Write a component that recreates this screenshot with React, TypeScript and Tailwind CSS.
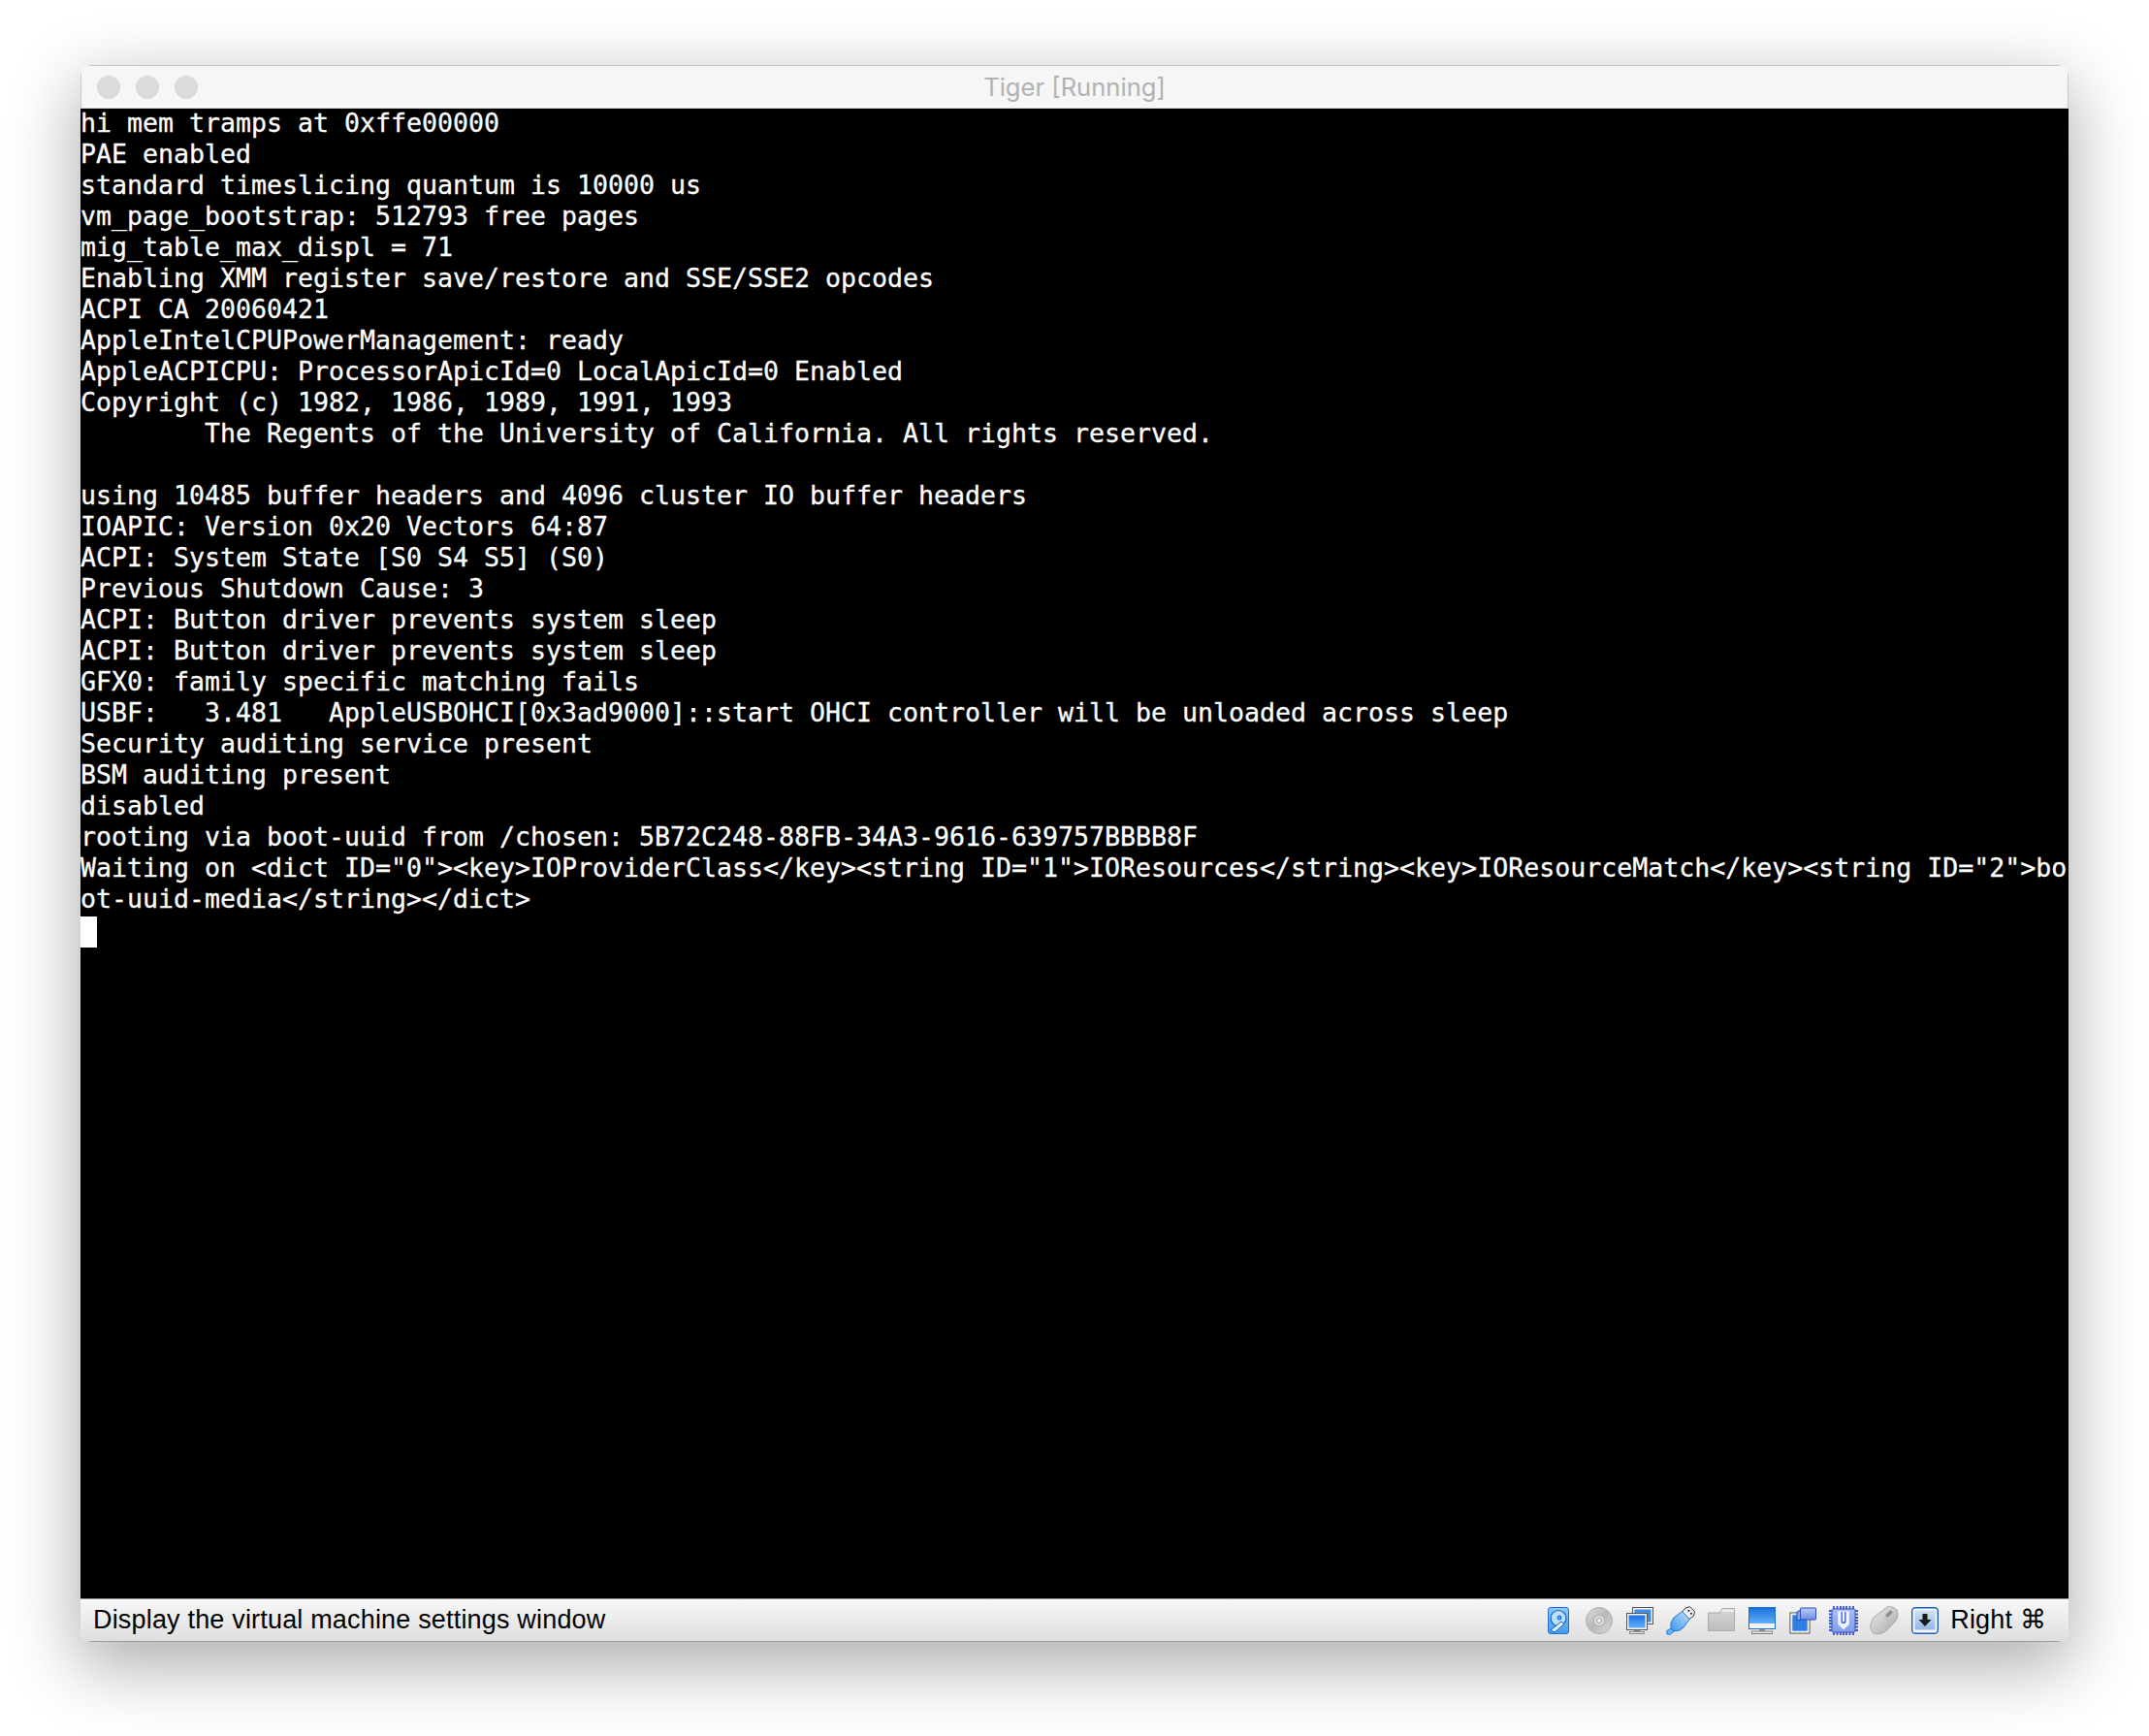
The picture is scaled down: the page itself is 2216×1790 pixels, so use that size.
import React from "react";

const lines = [
  "hi mem tramps at 0xffe00000",
  "PAE enabled",
  "standard timeslicing quantum is 10000 us",
  "vm_page_bootstrap: 512793 free pages",
  "mig_table_max_displ = 71",
  "Enabling XMM register save/restore and SSE/SSE2 opcodes",
  "ACPI CA 20060421",
  "AppleIntelCPUPowerManagement: ready",
  "AppleACPICPU: ProcessorApicId=0 LocalApicId=0 Enabled",
  "Copyright (c) 1982, 1986, 1989, 1991, 1993",
  "        The Regents of the University of California. All rights reserved.",
  " ",
  "using 10485 buffer headers and 4096 cluster IO buffer headers",
  "IOAPIC: Version 0x20 Vectors 64:87",
  "ACPI: System State [S0 S4 S5] (S0)",
  "Previous Shutdown Cause: 3",
  "ACPI: Button driver prevents system sleep",
  "ACPI: Button driver prevents system sleep",
  "GFX0: family specific matching fails",
  "USBF:   3.481   AppleUSBOHCI[0x3ad9000]::start OHCI controller will be unloaded across sleep",
  "Security auditing service present",
  "BSM auditing present",
  "disabled",
  "rooting via boot-uuid from /chosen: 5B72C248-88FB-34A3-9616-639757BBBB8F",
  'Waiting on <dict ID="0"><key>IOProviderClass</key><string ID="1">IOResources</string><key>IOResourceMatch</key><string ID="2">bo',
  "ot-uuid-media</string></dict>",
];

const Defs = () => (
  <svg width="0" height="0" className="absolute">
    <defs>
      <linearGradient id="blueV" x1="0" y1="0" x2="0" y2="1">
        <stop offset="0" stopColor="#1a6fe0" />
        <stop offset="1" stopColor="#62b0f8" />
      </linearGradient>
      <linearGradient id="hdd" x1="0" y1="0" x2="0" y2="1">
        <stop offset="0" stopColor="#8fcbf8" />
        <stop offset="1" stopColor="#3f9bf0" />
      </linearGradient>
      <linearGradient id="cd" x1="0" y1="0" x2="1" y2="1">
        <stop offset="0" stopColor="#dedede" />
        <stop offset="0.5" stopColor="#b8b8b8" />
        <stop offset="1" stopColor="#dcdcdc" />
      </linearGradient>
      <linearGradient id="usb" x1="0" y1="1" x2="1" y2="0">
        <stop offset="0" stopColor="#3d94ea" />
        <stop offset="1" stopColor="#bfe3fb" />
      </linearGradient>
      <linearGradient id="folder" x1="0" y1="0" x2="0" y2="1">
        <stop offset="0" stopColor="#d6d6d6" />
        <stop offset="1" stopColor="#bdbdbd" />
      </linearGradient>
      <linearGradient id="clip" x1="0" y1="0" x2="0" y2="1">
        <stop offset="0" stopColor="#b6cdf8" />
        <stop offset="1" stopColor="#6f8fe6" />
      </linearGradient>
      <linearGradient id="cpu" x1="0" y1="0" x2="0" y2="1">
        <stop offset="0" stopColor="#a8c0f4" />
        <stop offset="1" stopColor="#7f9cec" />
      </linearGradient>
      <linearGradient id="mouse" x1="0" y1="0" x2="1" y2="1">
        <stop offset="0" stopColor="#eeeeee" />
        <stop offset="1" stopColor="#a4a4a4" />
      </linearGradient>
      <linearGradient id="arrowBg" x1="0" y1="0" x2="0" y2="1">
        <stop offset="0" stopColor="#cfe0f5" />
        <stop offset="1" stopColor="#93b6e4" />
      </linearGradient>
    </defs>
  </svg>
);

const Box = ({ children }: { children: React.ReactNode }) => (
  <svg width="28" height="28" viewBox="0 0 28 28" className="shrink-0">
    {children}
  </svg>
);

const Hdd = () => (
  <Box>
    <rect x="3.5" y="0.5" width="21" height="27" rx="2.5" fill="url(#hdd)" stroke="#1c6fd0" />
    <circle cx="14" cy="11.5" r="8" fill="#b9e0fb" stroke="#0f62c4" strokeWidth="1.2" />
    <circle cx="15" cy="11" r="2" fill="#4fa3ee" stroke="#0f62c4" />
    <path d="M6 24 L17 15 L20 17.5 L10 26 Z" fill="#e6f3fd" stroke="#0f62c4" />
  </Box>
);

const Cd = () => (
  <Box>
    <circle cx="14" cy="14" r="13.5" fill="url(#cd)" stroke="#ababab" />
    <circle cx="14" cy="14" r="5.5" fill="#dedede" stroke="#b0b0b0" />
    <circle cx="14" cy="14" r="2.5" fill="#f4f4f4" stroke="#9c9c9c" />
  </Box>
);

const Monitors = () => (
  <Box>
    <rect x="6.5" y="0.5" width="21" height="17" fill="#f4f4f4" stroke="#555" />
    <rect x="8.5" y="2.5" width="17" height="13" fill="#3f8fe8" />
    <rect x="0.5" y="6.5" width="21" height="17" fill="#f4f4f4" stroke="#555" />
    <rect x="2.5" y="8.5" width="17" height="13" fill="url(#blueV)" />
    <rect x="8" y="24" width="6" height="1.5" fill="#888" />
    <rect x="3.5" y="25.5" width="15" height="2" fill="#e8e8e8" stroke="#666" strokeWidth="0.7" />
  </Box>
);

const Usb = () => (
  <svg width="30" height="30" viewBox="0 0 30 30" className="shrink-0 -mx-px">
    <path d="M20 2 L24.5 0.8 L29.5 5.6 L28.5 10 L24 13.5 L16.5 6 Z" fill="#f2f2f2" stroke="#333" />
    <rect x="22.5" y="4" width="1.8" height="1.8" fill="#222" />
    <rect x="25" y="6.8" width="1.8" height="1.8" fill="#222" />
    <path d="M16.5 5.5 L24.2 13.5 L18 22 Q14 26.5 8 26 L5 23 Q3.5 17 8 12 Z" fill="url(#usb)" stroke="#1f78d8" />
    <path d="M5 23 L8 26 L4.5 29.2 L1 29 L0.8 25.5 Z" fill="#6fb4f0" stroke="#1f78d8" />
  </svg>
);

const Folder = () => (
  <Box>
    <path d="M0.5 6 L12 6 L15 1.5 L27.5 1.5 L27.5 24.5 L0.5 24.5 Z" fill="url(#folder)" stroke="#aaa" />
    <path d="M15.5 2.5 L27 2.5 L27 5 L13.5 5 Z" fill="#ececec" />
  </Box>
);

const Display = () => (
  <Box>
    <rect x="0.5" y="0.5" width="27" height="22" fill="#f4f4f4" stroke="#1a6fd0" />
    <rect x="1" y="1" width="26" height="16" fill="url(#blueV)" />
    <rect x="11" y="23" width="6" height="2" fill="#999" />
    <rect x="3.5" y="25" width="21" height="2.5" fill="#e8e8e8" stroke="#666" strokeWidth="0.8" />
  </Box>
);

const Shared = () => (
  <Box>
    <rect x="1" y="6" width="20" height="21" fill="none" stroke="#444" strokeWidth="1" />
    <rect x="2.5" y="7.5" width="17" height="18" fill="#2f7fe4" stroke="#f4f4f4" strokeWidth="1.6" />
    <path d="M8 5 L12 3 L12 13 L8 14 Z" fill="#8aa8ee" stroke="#2b4bb8" />
    <rect x="11.5" y="1" width="16" height="12" rx="1" fill="url(#clip)" stroke="#2b4bb8" />
  </Box>
);

const Cpu = () => (
  <svg width="30" height="30" viewBox="0 0 30 30" className="shrink-0 -mx-px">
    <path
      d="M5 0v3M8.5 0v3M12 0v3M15 0v3M18 0v3M21.5 0v3M25 0v3M5 27v3M8.5 27v3M12 27v3M15 27v3M18 27v3M21.5 27v3M25 27v3M0 5h3M0 8.5h3M0 12h3M0 15h3M0 18h3M0 21.5h3M0 25h3M27 5h3M27 8.5h3M27 12h3M27 15h3M27 18h3M27 21.5h3M27 25h3"
      stroke="#3a52c4"
      strokeWidth="1.8"
    />
    <rect x="3" y="3" width="24" height="24" rx="1.5" fill="url(#cpu)" stroke="#3a52c4" />
    <path d="M9.5 5.5 H20.5 V19 L15 24 L9.5 19 Z" fill="#f0f4fe" stroke="#dfe6fb" />
    <path d="M12.5 6 V15.5 Q12.5 18 15 18 Q17.5 18 17.5 15.5 V6 Z" fill="#3a52c4" />
    <path d="M13.8 6 V15 Q13.8 16.6 15 16.6 Q16.2 16.6 16.2 15 V6 Z" fill="#eef2fd" />
  </svg>
);

const Mouse = () => (
  <svg width="30" height="30" viewBox="0 0 30 30" className="shrink-0 -mx-px">
    <path d="M18 0.8 Q25 0 28 4 Q30.5 10 26.5 16 L16 26.5 Q10 30 5 28.8 Q0.5 26 0.8 20 Q1.5 15 5 11 Z" fill="url(#mouse)" stroke="#ababab" />
    <path d="M17 8.5 L20.5 5 Q22 4.2 23 5 Q24 6 23 7.4 L19.5 11 Q18 12 17 11 Q16 10 17 8.5 Z" fill="#8e8e8e" />
    <path d="M3 17 Q12 19 15 26" fill="none" stroke="#d0d0d0" />
  </svg>
);

const Arrow = () => (
  <Box>
    <rect x="0.7" y="0.7" width="26.6" height="26.6" rx="3.5" fill="#f4f8fd" stroke="#1a62c0" strokeWidth="1.4" />
    <rect x="3.5" y="3.5" width="21" height="20" rx="1" fill="url(#arrowBg)" />
    <path d="M11.5 7 H16.5 V13 H20.5 L14 20 L7.5 13 H11.5 Z" fill="#1a1a1a" />
  </Box>
);

export default function App() {
  return (
    <div className="w-[2216px] h-[1790px] bg-white pt-[67px] pl-[83px] overflow-hidden">
      <Defs />
      <div className="w-[2050px] h-[1626px] flex flex-col rounded-[12px] overflow-hidden shadow-[0_22px_70px_4px_rgba(0,0,0,0.32)]">
        <div className="relative h-[45px] shrink-0 flex items-center gap-4 pl-[16px] bg-[#f6f6f6] border-t-[1.5px] border-x border-b border-x-[#c8c8c8] border-t-[#c4c4c4] border-b-[#d4d4d4]">
          <span className="w-6 h-6 rounded-full bg-[#dcdcdc] border border-[#d2d2d2]" />
          <span className="w-6 h-6 rounded-full bg-[#dcdcdc] border border-[#d2d2d2]" />
          <span className="w-6 h-6 rounded-full bg-[#dcdcdc] border border-[#d2d2d2]" />
          <span className="absolute inset-0 flex items-center justify-center pt-[2px] text-[25.6px] text-[#b2b2b2] font-['Inter',sans-serif]">
            Tiger [Running]
          </span>
        </div>
        <div className="flex-1 bg-black text-white font-['DejaVu_Sans_Mono',monospace] text-[26.58px] leading-8 whitespace-pre overflow-hidden [-webkit-text-stroke:0.3px_white]">
          <div className="-mt-px">
            {lines.map((l, i) => (
              <div key={i} className="h-8">
                {l}
              </div>
            ))}
          </div>
          <div className="w-[17px] h-8 mt-[2px] bg-white" />
        </div>
        <div className="h-[45px] shrink-0 flex items-center justify-between pl-[13px] pr-[23px] bg-gradient-to-b from-[#f8f8f8] to-[#dedede] border-t border-t-[#8a8a8a] border-b border-b-[#9c9c9c] font-['Liberation_Sans',sans-serif] text-[27px] tracking-[0.18px] text-black">
          <span>Display the virtual machine settings window</span>
          <div className="flex items-center gap-[14px]">
            <Hdd />
            <Cd />
            <Monitors />
            <Usb />
            <Folder />
            <Display />
            <Shared />
            <Cpu />
            <Mouse />
            <Arrow />
            <span className="whitespace-pre -ml-[2px]">Right ⌘</span>
          </div>
        </div>
      </div>
    </div>
  );
}
